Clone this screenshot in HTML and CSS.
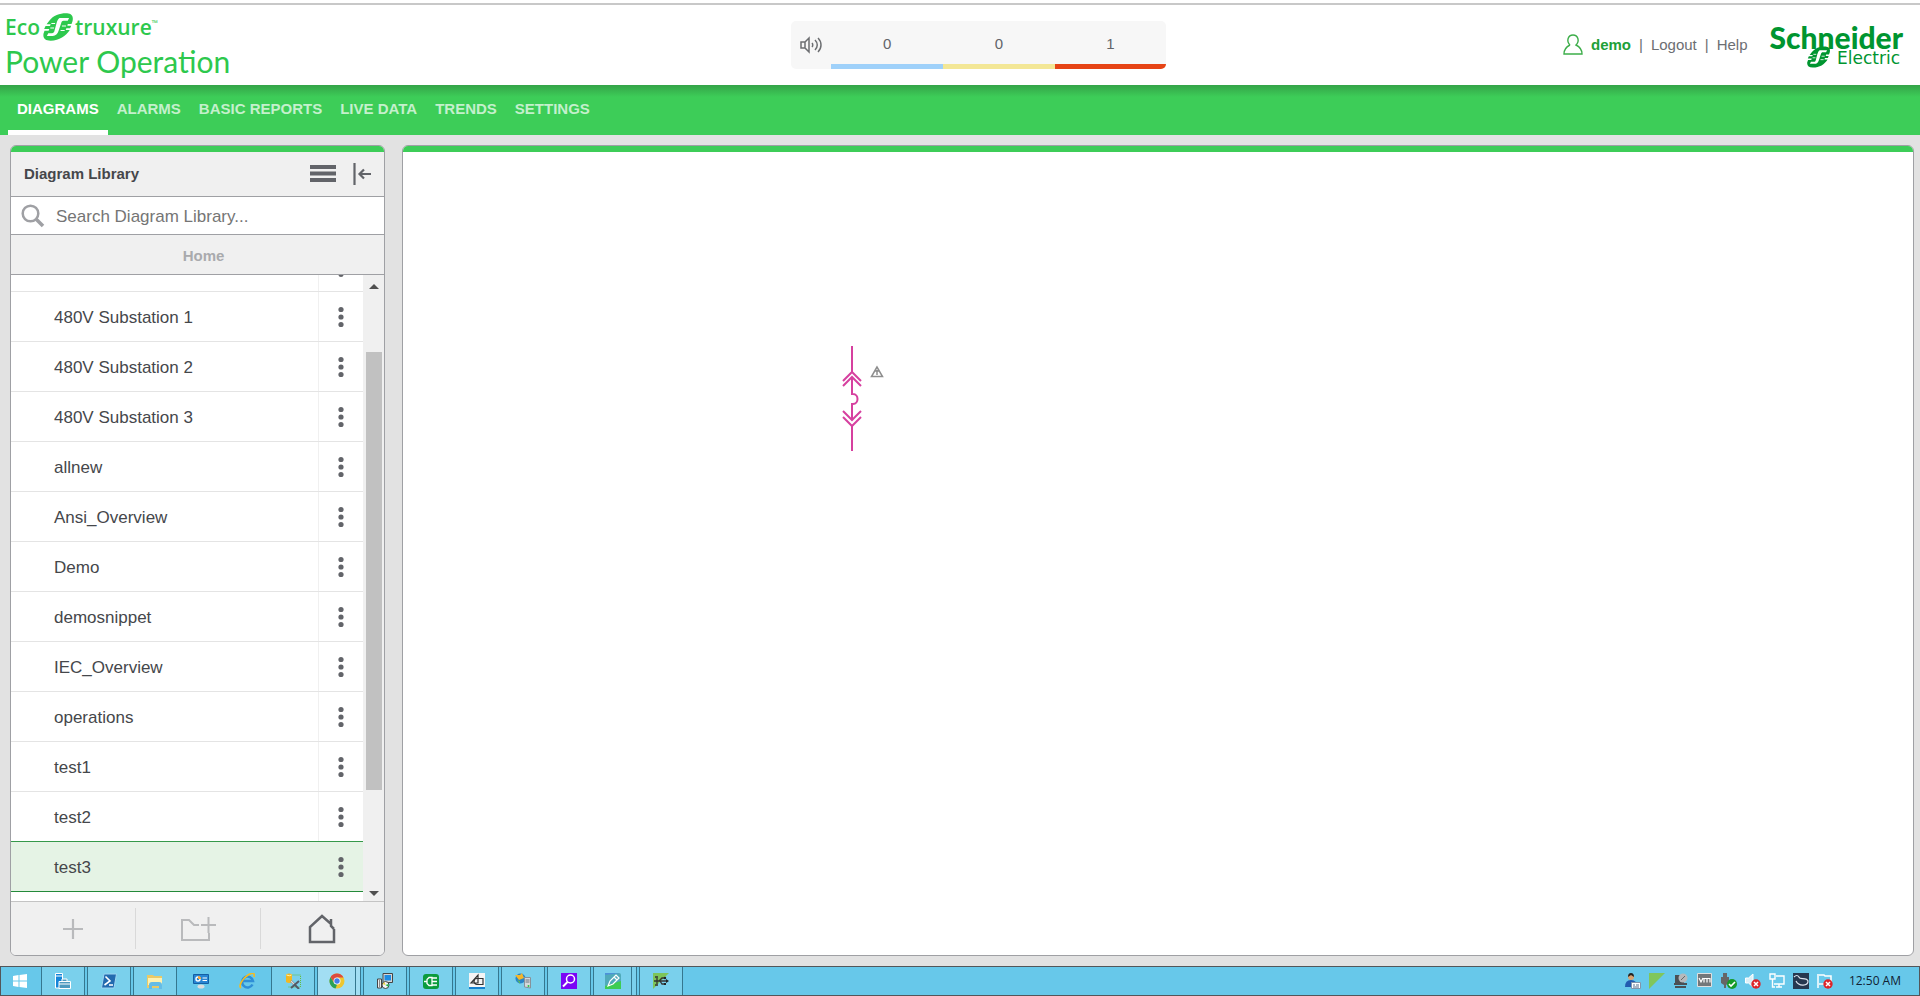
FILE: index.html
```html
<!DOCTYPE html>
<html lang="en">
<head>
<meta charset="utf-8">
<title>Power Operation</title>
<link rel="stylesheet" href="styles.css">
</head>
<body>
<svg class="defs" aria-hidden="true">
  <symbol id="mark" viewBox="0 0 87 82">
    <path fill="currentColor" d="M18 23C30 6 52 0 70 1c15 1 19 10 16 23l-3 8H72l-1 5h11l-3 8H68l-2 5h12C66 68 48 81 22 81 6 81-1 74 1 61l3-9h12l2-5H3l4-9h13l2-5H10z"/>
    <path fill="#fff" d="M48 15h28l-4 8H60c-4 0-6 2-7 6l-8 24c-3 9-8 14-17 14H11l4-8h11c4 0 6-2 7-6l6-22c2-7 4-12 9-16z"/>
    <path fill="none" stroke="#fff" stroke-width="3" d="M24 31h11M21 44h11M55 38h12M51 51h12"/>
  </symbol>
  <symbol id="dots" viewBox="0 0 6 22"><circle cx="3" cy="3.500" r="2.600"/><circle cx="3" cy="11" r="2.600"/><circle cx="3" cy="18.500" r="2.600"/></symbol>
</svg>

<header class="header">
  <div class="brand">
    <div class="brand-top"><span>Eco</span><svg class="brand-mark" aria-hidden="true"><use href="#mark"/></svg><span>truxure</span><small>™</small></div>
    <div class="brand-name">Power Operation</div>
  </div>
  <div class="alarms">
    <button class="sound" aria-label="Alarm sound"><svg width="22" height="18" viewBox="0 0 22 18" fill="none" stroke="#6d6f72" stroke-width="1.5"><path d="M9 2v14L5 12H1V6h4zM5 6v6M12 7c1 1 1 3 0 4M15 4c3 3 3 7 0 10M18 2c4 4 4 10 0 14"/></svg></button>
    <button class="count low"><span>0</span></button>
    <button class="count medium"><span>0</span></button>
    <button class="count high"><span>1</span></button>
  </div>
  <div class="account">
    <svg width="20" height="22" viewBox="0 0 20 22" fill="none" stroke="#3dae4a" stroke-width="1.4"><path d="M7 11C3 7 5 1 10 1s7 6 3 10c4 2 6 5 6 9h-2M7 11c-4 2-6 5-6 9h16"/></svg>
    <a class="user" href="#user">demo</a><span>|</span><a href="#logout">Logout</a><span>|</span><a href="#help">Help</a>
    <div class="company">
      <div class="company-name">Schneider</div>
      <div class="company-sub"><svg class="company-mark" aria-hidden="true"><use href="#mark"/></svg><span>Electric</span></div>
    </div>
  </div>
</header>

<nav class="nav">
  <a class="active" href="#diagrams">DIAGRAMS</a>
  <a href="#alarms">ALARMS</a>
  <a href="#reports">BASIC REPORTS</a>
  <a href="#live">LIVE DATA</a>
  <a href="#trends">TRENDS</a>
  <a href="#settings">SETTINGS</a>
</nav>

<main class="main">
  <aside class="panel library">
    <div class="library-head">
      <h1>Diagram Library</h1>
      <button aria-label="Menu"><svg width="26" height="18" viewBox="0 0 26 18" fill="#626469"><path d="M0 0h26v4H0zM0 6.500h26v4H0zM0 13h26v4H0z"/></svg></button>
      <button aria-label="Collapse"><svg width="18" height="24" viewBox="0 0 18 24" fill="none" stroke="#626469" stroke-width="2.200"><path d="M1.500 1v22M18 12H7M11 7.500L6.500 12l4.500 4.500"/></svg></button>
    </div>
    <label class="search">
      <svg width="24" height="24" viewBox="0 0 24 24" fill="none" stroke="#9fa0a4"><circle cx="9.500" cy="9.500" r="7.800" stroke-width="2.500"/><path d="M15 15l7 7" stroke-width="3.500"/></svg>
      <input type="text" aria-label="Search Diagram Library" placeholder="Search Diagram Library...">
    </label>
    <div class="crumb">Home</div>
    <div class="list-area">
      <ul class="list">
        <li><a href="#d0" aria-label="Previous diagram"></a><button aria-label="Options"><svg><use href="#dots"/></svg></button></li>
        <li><a href="#d1">480V Substation 1</a><button aria-label="Options"><svg><use href="#dots"/></svg></button></li>
        <li><a href="#d2">480V Substation 2</a><button aria-label="Options"><svg><use href="#dots"/></svg></button></li>
        <li><a href="#d3">480V Substation 3</a><button aria-label="Options"><svg><use href="#dots"/></svg></button></li>
        <li><a href="#d4">allnew</a><button aria-label="Options"><svg><use href="#dots"/></svg></button></li>
        <li><a href="#d5">Ansi_Overview</a><button aria-label="Options"><svg><use href="#dots"/></svg></button></li>
        <li><a href="#d6">Demo</a><button aria-label="Options"><svg><use href="#dots"/></svg></button></li>
        <li><a href="#d7">demosnippet</a><button aria-label="Options"><svg><use href="#dots"/></svg></button></li>
        <li><a href="#d8">IEC_Overview</a><button aria-label="Options"><svg><use href="#dots"/></svg></button></li>
        <li><a href="#d9">operations</a><button aria-label="Options"><svg><use href="#dots"/></svg></button></li>
        <li><a href="#d10">test1</a><button aria-label="Options"><svg><use href="#dots"/></svg></button></li>
        <li><a href="#d11">test2</a><button aria-label="Options"><svg><use href="#dots"/></svg></button></li>
        <li class="selected"><a href="#d12">test3</a><button aria-label="Options"><svg><use href="#dots"/></svg></button></li>
        <li><a href="#d13" aria-label="Next diagram"></a><button aria-label="Options"><svg><use href="#dots"/></svg></button></li>
      </ul>
      <div class="scrollbar" aria-hidden="true">
        <svg width="10" height="5" viewBox="0 0 10 5"><path d="M0 5l5-5 5 5z" fill="#505050"/></svg>
        <div class="track"><div class="thumb"></div></div>
        <svg width="10" height="5" viewBox="0 0 10 5"><path d="M0 0l5 5 5-5z" fill="#505050"/></svg>
      </div>
    </div>
    <div class="tools">
      <button aria-label="Add diagram"><svg width="20" height="20" viewBox="0 0 20 20" stroke="#b9babc" stroke-width="2.200"><path d="M10 0v20M0 10h20"/></svg></button>
      <button aria-label="Add folder"><svg width="36" height="28" viewBox="0 0 36 28" fill="none" stroke="#b9babc" stroke-width="2"><path d="M19 10h-5L9 5H2v20h27v-7M21 10h15M28.500 2v16"/></svg></button>
      <button aria-label="Home"><svg width="28" height="30" viewBox="0 0 28 30" fill="none" stroke="#626469" stroke-width="2.500"><path d="M26 15v13H2V13L14 2l9 8V5M26 15l-3-3V5"/></svg></button>
    </div>
  </aside>

  <section class="panel canvas" aria-label="Diagram">
    <svg class="breaker" width="50" height="108" viewBox="0 0 50 108" fill="none" stroke="#d6409f" stroke-width="2">
      <path d="M11 1v27M2 36l9-9 9 9M2 41l9-9 9 9M11 32v17h1c6 0 6 10 0 10h-1v16M2 66l9 9 9-9M2 72l9 9 9-9M11 80v26"/>
      <path d="M36 22l-5.500 9.500h11zM36 25v5M34 26h4" stroke="#8e8e8e" stroke-width="1.500"/>
    </svg>
  </section>
</main>

<footer class="taskbar">
  <button class="start" aria-label="Start"><svg viewBox="0 0 16 16" fill="#fff"><path d="M1 3l5.500-1v5.500H1zM7.500 2L15 1v6.500H7.500zM1 8.500h5.500V14L1 13zM7.500 8.500H15V15l-7.500-1z"/></svg></button>
  <button class="task open" aria-label="Server Manager"><svg viewBox="0 0 16 16"><path d="M.5.500h7V15H.5z" fill="#1585d8" stroke="#fff"/><path d="M1 3h6" stroke="#fff"/><path d="M4 8.500h11.500v7H4zM7 8V6h5v2" fill="#4e9abf" stroke="#fff"/><path d="M4 11h11" stroke="#fff"/></svg></button>
  <button class="task open" aria-label="PowerShell"><svg viewBox="0 0 16 16"><path d="M3 1h12.500L13 15H.5z" fill="#236baf" stroke="#9dd5f1"/><path d="M4.500 3.500L9 8l-5.500 4M8 12h4" stroke="#fff" stroke-width="1.600" fill="none"/></svg></button>
  <button class="task open" aria-label="File Explorer"><svg viewBox="0 0 16 16"><path d="M0 2h6l1 1h8v12H0z" fill="#e9ca68"/><path d="M1 5h14v7H1z" fill="#fff1b0"/><path d="M2 16v-4q0-3 3-3h7q3 0 3 3v4h-3v-3H5v3z" fill="#65bce6"/></svg></button>
  <button class="task" aria-label="Control Panel"><svg viewBox="0 0 16 16"><path d="M.5 1.500h15v9H.5z" fill="#2785d3" stroke="#145fa4"/><circle cx="5" cy="6" r="2" fill="none" stroke="#fff" stroke-width="1.400"/><path d="M5 6V3a3 3 0 013 3z" fill="#f6a63a"/><path d="M9.500 5H14M9.500 7.500H14" stroke="#fff"/><ellipse cx="8" cy="13.500" rx="3.500" ry="2" fill="#ddd"/></svg></button>
  <button class="task" aria-label="Internet Explorer"><svg viewBox="0 0 16 16" fill="none"><path d="M13.500 11.500a5.500 5.500 0 11.500-3.500H4" stroke="#2f8fd7" stroke-width="2.500"/><path d="M2 15C-1 13 4 5 9 2s7-2 6 2" stroke="#f3bb22" stroke-width="1.700"/></svg></button>
  <button class="task open" aria-label="Database tools"><svg viewBox="0 0 16 16"><path d="M6.500 2h9v12h-13" fill="none" stroke="#63bd3d" stroke-dasharray="1 1"/><path d="M1 1.500q3-2 6 0V9q-3 2-6 0z" fill="#f2b822"/><path d="M1.500 2q3 1.500 5 0" stroke="#fff3b0" fill="none"/><path d="M6 8l8 8M14 8l-8 7" stroke="#555b66" stroke-width="2"/><path d="M6 8l3 3" stroke="#ddd" stroke-width="1.500"/></svg></button>
  <button class="task open current stacked" aria-label="Chrome"><svg viewBox="0 0 16 16"><circle cx="8" cy="8" r="7.500" fill="#efc62f"/><path d="M1.500 4.200A7.500 7.500 0 0114.500 4.500H8L5 9.500z" fill="#dc4b3e"/><path d="M1.500 4.200L5 9.800l3 2-1.500 3.600A7.500 7.500 0 011.500 4.200z" fill="#2aa157"/><circle cx="8" cy="8" r="3.500" fill="#fff"/><circle cx="8" cy="8" r="2.700" fill="#447ee8"/></svg></button>
  <button class="task open" aria-label="Installer"><svg viewBox="0 0 16 16"><path d="M.5 6h4v9h-4z" fill="#eee" stroke="#444"/><path d="M2.500 7v7" stroke="#888"/><path d="M6 .5h9.500v9H6z" fill="#d6d6d6" stroke="#444"/><path d="M7.500 2h6.500v5.500H7.500z" fill="#1d8be1"/><circle cx="8.500" cy="12" r="3.500" fill="#f4f4f4" stroke="#444"/><path d="M8.500 12l3-1v3z" fill="#15b44a"/><path d="M8.500 12l-3-1 2-2z" fill="#e7cf3d"/></svg></button>
  <button class="task open" aria-label="Device plug"><svg viewBox="0 0 16 16"><rect y="1" width="16" height="15" rx="3" fill="#0b9b3d"/><path d="M1 8.500h3M9 4.500H6l-2 2v4l2 2h3zM9 5h5M9 8.500h5M9 12h5" fill="none" stroke="#fff" stroke-width="1.300"/></svg></button>
  <button class="task open" aria-label="Shape editor"><svg viewBox="0 0 16 16"><path d="M0 0h16v14H0z" fill="#f5f5f5"/><path d="M0 14h16v2H0z" fill="#1681cf"/><path d="M9 2v8H2zM8 5.500h6v6H8a3 3 0 010-6" fill="none" stroke="#333" stroke-width="1.200"/></svg></button>
  <button class="task open" aria-label="Network server"><svg viewBox="0 0 16 16"><circle cx="5.500" cy="5.500" r="5" fill="#2785c9"/><path d="M0 2h5l2-2 2 5-5 2z" fill="#f3b72c"/><path d="M2 7l3 1v3z" fill="#58b65c"/><path d="M9.500 4.500h6V15l-6-1z" fill="#d5d9dc" stroke="#87929a"/><path d="M10.500 7h4M10.500 9h4" stroke="#6c7780"/><circle cx="13.500" cy="13" r="1" fill="#2ac045"/></svg></button>
  <button class="task open" aria-label="Search tool"><svg viewBox="0 0 16 16"><path d="M0 0h16v16H0z" fill="#7b05f5"/><circle cx="9.500" cy="6" r="4" fill="none" stroke="#fff" stroke-width="1.500"/><path d="M6.500 9L2 13.500" stroke="#fff" stroke-width="2"/></svg></button>
  <button class="task open stacked" aria-label="Graphics editor"><svg viewBox="0 0 16 16"><rect width="16" height="16" rx="2" fill="#50aaba"/><path d="M0 2V0h15z" fill="#4c91d9"/><path d="M0 16v-3l16-5v8z" fill="#3dcc52"/><path d="M3 13l2-5 6-6 3 3-6 6zM9 4l3 3" fill="none" stroke="#fff" stroke-width="1.200"/></svg></button>
  <button class="task open" aria-label="USB device"><svg viewBox="0 0 16 16"><path d="M0 0h16L0 16z" fill="#7dc55a"/><path d="M1 8h13M6 8l3-3h3M7 8l2 3h3M2 4h3M2 12h3M4 5v6" stroke="#333" stroke-width="1.300" fill="none"/><circle cx="12" cy="5" r="1.200" fill="#222"/><path d="M11 10h2v2h-2zM13 6l3 2-3 2z" fill="#222"/></svg></button>
  <div class="tray">
    <svg viewBox="0 0 16 16"><circle cx="6" cy="4" r="3" fill="#d8a372"/><path d="M3 4q0-4 3-4t3 4L6 2z" fill="#222"/><path d="M0 14q0-7 6-7t6 7z" fill="#225bb0"/><path d="M6.500 9.500h9v6h-9z" fill="#fff" stroke="#8295aa"/><path d="M8 12h2M11 12h3M8 14h6" stroke="#58718d"/></svg>
    <svg viewBox="0 0 16 16"><path d="M0 0h16L0 16z" fill="#80c65b"/></svg>
    <svg viewBox="0 0 16 16"><path d="M2 2h9v8H2zM1 10h13v2H1zM2 13h11v2H2z" fill="#4b5054"/><circle cx="10" cy="5" r="4.500" fill="#b5b9bc"/><path d="M8 7l4-4" stroke="#666"/></svg>
    <svg viewBox="0 0 16 16"><path d="M.5.500h14v13H.5z" fill="#73777a" stroke="#e0e0e0"/><path d="M2 5l2 4 2-4M7 9.500V5.500h3v4M10 5.500h3v4" fill="none" stroke="#fff" stroke-width="1.200"/></svg>
    <svg viewBox="0 0 16 16"><path d="M2 0h4v4H2zM0 4h8v6l-3 2v3H3v-3l-3-2z" fill="#666"/><circle cx="11" cy="11" r="5" fill="#169b29"/><path d="M8 11l2 2 4-4" fill="none" stroke="#fff" stroke-width="1.600"/></svg>
    <svg viewBox="0 0 16 16"><path d="M.5 5h3L8 1v13l-4.500-4h-3z" fill="#dceff7" stroke="#fff"/><circle cx="11" cy="11" r="4.700" fill="#dc252a"/><path d="M9 9l4 4M13 9l-4 4" stroke="#fff" stroke-width="1.500"/></svg>
    <svg viewBox="0 0 16 16" fill="none" stroke="#fff" stroke-width="1.400"><path d="M7 3h8v8H5M10 11v3M7 14h6M1 1h5v5H1zM3.500 6v8H6"/></svg>
    <svg viewBox="0 0 16 16"><path d="M0 0h16v16H0z" fill="#26384f"/><path d="M1 4q3-3 5 0c0 3 8 0 9 4 0 5-9 6-12 0" fill="none" stroke="#dce4ee" stroke-width="1.200"/></svg>
    <svg viewBox="0 0 16 16"><path d="M1 1v14M2 2h5l1 1h6v8H2" fill="none" stroke="#fff" stroke-width="1.500"/><circle cx="11" cy="11" r="4.700" fill="#dc252a"/><path d="M9 9l4 4M13 9l-4 4" stroke="#fff" stroke-width="1.500"/></svg>
    <time>12:50 AM</time>
  </div>
</footer>
</body>
</html>
```
FILE: styles.css
```css
* { box-sizing: border-box; }
html, body { height: 100%; }
body {
  margin: 0;
  display: flex;
  flex-direction: column;
  background: #e2e2e2;
  color: #45474b;
  font: 15px/20px "Liberation Sans", Arial, sans-serif;
}
button { margin: 0; padding: 0; border: 0; background: none; font: inherit; color: inherit; }
a { color: inherit; text-decoration: none; }
svg { display: block; flex: none; }
.defs { position: absolute; width: 0; height: 0; }

.header {
  flex: none;
  display: grid;
  grid-template-columns: 21fr auto 20fr;
  height: 85px;
  padding-top: 5px;
  background: #fff linear-gradient(#c8c8c8, #c8c8c8) 0 3px / 100% 2px no-repeat;
}
.brand { padding: 8px 0 0 5px; color: #2dc84d; }
.brand-top { display: flex; align-items: center; height: 28px; font: 600 21px/28px "Open Sans", sans-serif; }
.brand-top small { align-self: flex-start; font-size: 8px; line-height: 20px; }
.brand-mark { width: 30px; height: 28px; margin: 0 2px 0 3px; }
.brand-name { font: 400 30px/40px Lato, sans-serif; }

.alarms {
  display: flex;
  width: 375px;
  height: 48px;
  margin-top: 16px;
  border-radius: 5px;
  overflow: hidden;
  background: #f7f7f7;
}
.sound { display: flex; align-items: center; justify-content: center; width: 40px; }
.count { flex: 1; border-bottom: 5px solid; font-size: 15px; }
.count span { display: block; padding-top: 2px; color: #626469; }
.low { border-color: #9fd1fa; }
.medium { border-color: #f3e796; }
.high { border-color: #e64415; }

.account {
  display: flex;
  align-items: center;
  justify-content: flex-end;
  gap: 8px;
  padding: 0 17px 1px 0;
  color: #6c6e72;
}
.user { color: #21a038; font-weight: bold; }
.company { margin-left: 14px; color: #009530; }
.company-name { font: 900 30px/26px Lato, sans-serif; }
.company-sub { display: flex; justify-content: flex-end; gap: 7px; height: 16px; padding-right: 3px; font: 17px/16px "DejaVu Sans", sans-serif; }
.company-mark { width: 23px; height: 22px; margin-top: -4px; }

.nav {
  flex: none;
  display: flex;
  height: 50px;
  padding-left: 8px;
  background: linear-gradient(#34a348, #3dcd58 12px);
  color: #c4f0cc;
  font-weight: bold;
}
.nav a { padding: 14px 9px 0; border-bottom: 5px solid transparent; }
.nav .active { color: #fff; border-color: #fff; }

.main { flex: 1; min-height: 0; display: flex; gap: 17px; padding: 10px 6px 10px 10px; }
.panel { border: 1px solid #9fa0a4; border-radius: 6px; overflow: hidden; background: #fff; }
.panel::before { content: ""; display: block; flex: none; height: 6px; background: #3dcd58; }
.library { flex: none; width: 375px; display: flex; flex-direction: column; }
.canvas { flex: 1; }

.library-head { flex: none; display: flex; align-items: center; gap: 17px; height: 45px; padding: 0 13px; background: #f0f0f0; border-bottom: 1px solid #9fa0a4; }
.library-head h1 { flex: 1; margin: 0; font-size: 15px; line-height: 20px; }
.search { flex: none; display: flex; align-items: center; gap: 11px; height: 38px; padding-left: 10px; border-bottom: 1px solid #9fa0a4; }
.search input { flex: 1; border: 0; padding: 2px 0 0; font: 17px/24px "Liberation Sans", Arial, sans-serif; }
.search input::placeholder { color: #757575; }
.crumb { flex: none; height: 40px; padding-left: 12px; border-bottom: 1px solid #9fa0a4; background: #f0f0f0; color: #a9aaad; font-weight: bold; line-height: 41px; text-align: center; }

.list-area { flex: 1; min-height: 0; display: flex; overflow: hidden; }
.list { flex: 1; margin: -33px 0 0; padding: 0; list-style: none; font-size: 17px; }
.list li { display: flex; height: 50px; border-bottom: 1px solid #e4e4e4; }
.list a { flex: 1; padding-left: 43px; line-height: 52px; }
.list button { display: flex; align-items: center; justify-content: center; width: 45px; padding-top: 1px; border-left: 1px solid #f0f0f0; }
.list button svg { width: 6px; height: 22px; fill: #626469; }
.list .selected { background: #e5f3e5; box-shadow: 0 -1px #35984a; border-color: #248a3a; }
.list .selected button { border-color: transparent; }
.scrollbar { flex: none; display: flex; flex-direction: column; align-items: center; width: 21px; padding: 9px 0 5px; background: #f0f0f0; }
.track { flex: 1; display: flex; flex-direction: column; width: 16px; margin: 5px 0; padding-top: 58px; }
.thumb { height: 82%; background: #c1c1c1; }

.tools { flex: none; display: grid; grid-template-columns: 1fr 1fr 1fr; height: 54px; padding: 6px 0; border-top: 1px solid #c4c4c4; background: #f0f0f0; }
.tools button { display: flex; align-items: center; justify-content: center; border-left: 1px solid #d9d9d9; }
.tools button:first-child { border: 0; }

.breaker { margin: 193px 0 0 438px; }

.taskbar { flex: none; display: flex; gap: 2px; height: 30px; border: 1px solid #53565a; background: #67c8ea; }
.taskbar svg { width: 16px; height: 16px; }
.start { display: flex; align-items: center; justify-content: center; width: 38px; }
.task { display: flex; align-items: center; justify-content: center; width: 44px; }
.open { background: #7ad0ec; border: solid #35778f; border-width: 0 1px; }
.current { background: #a2def3; }
.stacked { padding-right: 4px; box-shadow: inset -4px 0 #7ad0ec, inset -5px 0 #35778f; }
.current.stacked { box-shadow: inset -4px 0 #a2def3, inset -5px 0 #35778f; }
.tray { display: flex; align-items: center; gap: 8px; margin-left: auto; padding-right: 18px; color: #123; }
.tray time { margin-left: 8px; font: 12px/16px "Open Sans", sans-serif; }
```
